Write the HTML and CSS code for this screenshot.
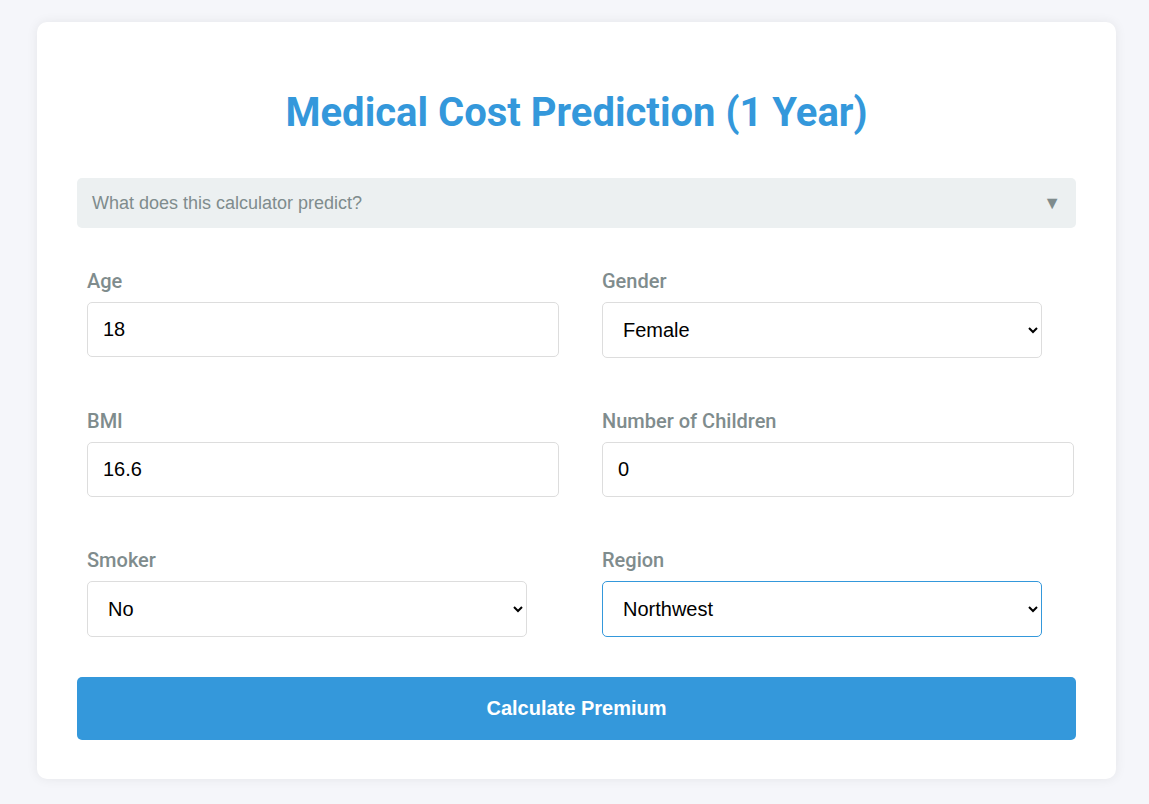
FILE: index.html
```html
<!DOCTYPE html>
<html lang="en">
<head>
<meta charset="utf-8">
<title>Medical Cost Prediction</title>
<link rel="stylesheet" href="styles.css">
</head>
<body>
<div class="card">
  <h1 class="title">Medical Cost Prediction (1 Year)</h1>
  <details class="info">
    <summary class="info-summary"><span>What does this calculator predict?</span><span class="info-arrow">▼</span></summary>
  </details>
  <form class="form">
    <div class="grid">
      <div class="field">
        <label class="label" for="age">Age</label>
        <input class="input" id="age" type="text" value="18">
      </div>
      <div class="field">
        <label class="label" for="gender">Gender</label>
        <select class="select" id="gender"><option>Female</option><option>Male</option></select>
      </div>
      <div class="field">
        <label class="label" for="bmi">BMI</label>
        <input class="input" id="bmi" type="text" value="16.6">
      </div>
      <div class="field">
        <label class="label" for="children">Number of Children</label>
        <input class="input" id="children" type="text" value="0">
      </div>
      <div class="field">
        <label class="label" for="smoker">Smoker</label>
        <select class="select" id="smoker"><option>No</option><option>Yes</option></select>
      </div>
      <div class="field">
        <label class="label" for="region">Region</label>
        <select class="select select-active" id="region"><option>Northwest</option><option>Northeast</option><option>Southwest</option><option>Southeast</option></select>
      </div>
    </div>
    <button class="button" type="button">Calculate Premium</button>
  </form>
</div>
</body>
</html>
```

FILE: styles.css
```css
html, body {
  margin: 0;
  background: #f5f6fa;
}
body {
  padding: 22px 33px 24px 37px;
  font-family: "Liberation Sans", Arial, sans-serif;
}
.card {
  background: #fff;
  border-radius: 10px;
  box-shadow: 0 0 12px rgba(0, 0, 0, 0.07);
  padding: 40px;
  height: 677px;
}
.title {
  font-family: Roboto, sans-serif;
  font-weight: 700;
  font-size: 40px;
  line-height: 44px;
  color: #3498db;
  text-align: center;
  margin: 29px 0 43px;
}
.info {
  background: #ecf0f1;
  border-radius: 5px;
}
.info-summary {
  list-style: none;
  display: flex;
  justify-content: space-between;
  align-items: center;
  height: 50px;
  padding: 0 15px;
  font-size: 18px;
  color: #7f8c8d;
  cursor: pointer;
}
.info-summary::-webkit-details-marker { display: none; }
.info-arrow {
  font-size: 18px;
  color: #7f8c8d;
  margin-right: 0;
}
.form {
  margin-top: 42px;
}
.grid {
  display: grid;
  grid-template-columns: 472px 472px;
  column-gap: 43px;
  row-gap: 52px;
  padding: 0 10px;
}
.field {
  display: flex;
  flex-direction: column;
  align-items: flex-start;
}
.label {
  font-family: Roboto, sans-serif;
  font-weight: 500;
  font-size: 20px;
  line-height: 22px;
  color: #7f8c8d;
  margin-bottom: 10px;
}
.input {
  width: 440px;
  padding: 15px;
  font-family: "Liberation Sans", Arial, sans-serif;
  font-size: 20px;
  line-height: 23px;
  border: 1px solid #ddd;
  border-radius: 5px;
  color: #000;
  outline: none;
  margin: 0;
}
.select {
  width: 440px;
  height: 56px;
  padding: 0 10px 0 16px;
  font-family: "Liberation Sans", Arial, sans-serif;
  font-size: 20px;
  border: 1px solid #ddd;
  border-radius: 5px;
  background: #fff;
  color: #000;
  outline: none;
  margin: 0;
}
.select-active {
  border-color: #3498db;
}
.button {
  display: block;
  width: 100%;
  height: 63px;
  margin-top: 40px;
  background: #3498db;
  color: #fff;
  border: none;
  border-radius: 5px;
  font-family: "Liberation Sans", Arial, sans-serif;
  font-weight: 700;
  font-size: 20px;
  cursor: pointer;
}
```
